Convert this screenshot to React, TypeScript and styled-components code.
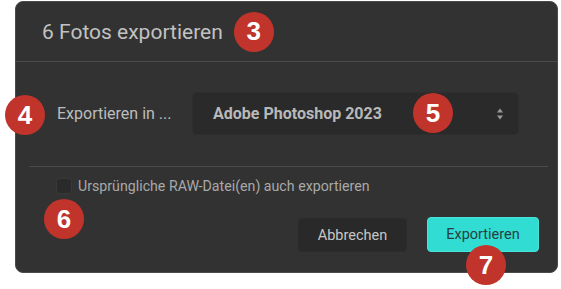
import React from 'react'
import styled, { createGlobalStyle } from 'styled-components'

const GlobalStyle = createGlobalStyle`
    body {
        margin: 0;
        background: #ffffff;
        font-family: Roboto, 'Liberation Sans', sans-serif;
    }
`

function Chevron() {
    return (
        <svg width='8' height='12' viewBox='0 0 8 12'>
            <path d='M4 0.5 L7 4.5 H1 Z' fill='#9a9a9a' />
            <path d='M4 11.5 L7 7.5 H1 Z' fill='#9a9a9a' />
        </svg>
    )
}

function App() {
    return (
        <Page>
            <GlobalStyle />
            <Dialog>
                <Header>
                    <Title>6 Fotos exportieren</Title>
                    <Badge>3</Badge>
                </Header>
                <Body>
                    <Row>
                        <Badge $left={-11} $top={3}>4</Badge>
                        <Label>Exportieren in ...</Label>
                        <Select>
                            <SelectValue>Adobe Photoshop 2023</SelectValue>
                            <Chevron />
                            <Badge $left={220} $top={0}>5</Badge>
                        </Select>
                    </Row>
                </Body>
                <Divider />
                <CheckRow>
                    <Checkbox />
                    <CheckLabel>Ursprüngliche RAW-Datei(en) auch exportieren</CheckLabel>
                    <Badge $left={28} $top={21}>6</Badge>
                </CheckRow>
                <Actions>
                    <Button>Abbrechen</Button>
                    <Button $primary>
                        Exportieren
                        <Badge $left={38} $top={27}>7</Badge>
                    </Button>
                </Actions>
            </Dialog>
        </Page>
    )
}

type BadgeProps = {
    $left?: number
    $top?: number
}

type ButtonProps = {
    $primary?: boolean
}

const Page = styled.div`
    min-height: 289px;
    padding: 1px 0 0 15px;
    box-sizing: border-box;
`

const Dialog = styled.div`
    position: relative;
    box-sizing: border-box;
    width: 543px;
    height: 272px;
    background: #323232;
    border: 1px solid #4a4a4a;
    border-radius: 8px;
`

const Header = styled.div`
    display: flex;
    align-items: center;
    height: 59px;
    padding-left: 26px;
    border-bottom: 1px solid #4a4a4a;
`

const Title = styled.div`
    font-size: 21px;
    color: #c2c2c2;
    margin-right: 11px;
`

const Badge = styled.div<BadgeProps>`
    position: ${(props) => (props.$left === undefined ? 'relative' : 'absolute')};
    left: ${(props) => (props.$left === undefined ? 'auto' : `${props.$left}px`)};
    top: ${(props) => (props.$top === undefined ? 'auto' : `${props.$top}px`)};
    z-index: 2;
    width: 40px;
    height: 40px;
    border-radius: 50%;
    background: #c1342b;
    color: #ffffff;
    display: flex;
    align-items: center;
    justify-content: center;
    font-family: 'Liberation Sans', Arial, sans-serif;
    font-weight: 700;
    font-size: 26px;
    flex-shrink: 0;
`

const Body = styled.div`
    padding: 30px 0 31px;
`

const Row = styled.div`
    position: relative;
    display: flex;
    align-items: center;
    gap: 20px;
    padding-left: 41px;
`

const Label = styled.div`
    width: 115px;
    font-size: 16px;
    color: #bdbdbd;
    white-space: nowrap;
`

const Select = styled.div`
    position: relative;
    box-sizing: border-box;
    width: 327px;
    height: 43px;
    display: flex;
    align-items: center;
    justify-content: space-between;
    padding: 0 14px 0 20px;
    background: #2a2a2a;
    border: 1px solid #2e2e2e;
    border-radius: 5px;
`

const SelectValue = styled.div`
    font-size: 16px;
    font-weight: 700;
    color: #b9b9b9;
`

const Divider = styled.div`
    height: 1px;
    margin: 0 9px 0 13px;
    background: #4a4a4a;
`

const CheckRow = styled.div`
    position: relative;
    display: flex;
    align-items: center;
    gap: 6px;
    margin-top: 11px;
    padding-left: 40px;
`

const Checkbox = styled.div`
    box-sizing: border-box;
    width: 16px;
    height: 16px;
    background: #2a2a2a;
    border: 1px solid #383838;
    border-radius: 3px;
`

const CheckLabel = styled.div`
    font-size: 14.2px;
    color: #a9a9a9;
`

const Actions = styled.div`
    display: flex;
    justify-content: flex-end;
    align-items: flex-end;
    gap: 20px;
    margin-top: 23px;
    padding-right: 18px;
`

const Button = styled.div<ButtonProps>`
    position: relative;
    box-sizing: border-box;
    width: ${(props) => (props.$primary ? '112px' : '109px')};
    height: ${(props) => (props.$primary ? '35px' : '34px')};
    display: flex;
    align-items: center;
    justify-content: center;
    font-size: 14.5px;
    border-radius: 4px;
    background: ${(props) => (props.$primary ? '#31dcd2' : '#292929')};
    border: 1px solid ${(props) => (props.$primary ? '#48e4da' : '#2c2c2c')};
    color: ${(props) => (props.$primary ? '#27403f' : '#c6c6c6')};
`

export default App
